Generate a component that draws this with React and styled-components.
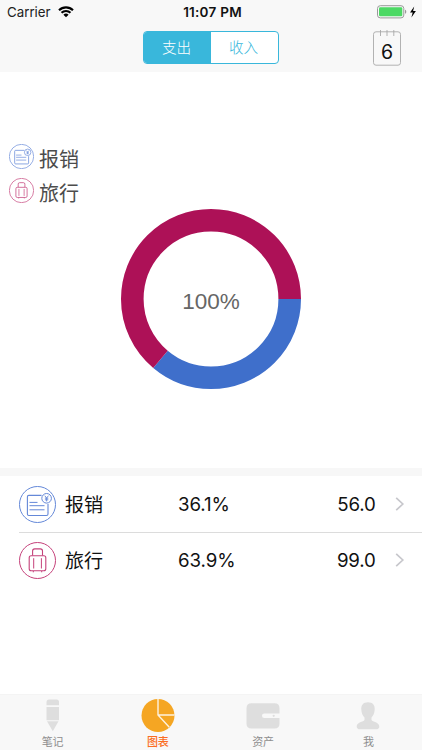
import * as React from 'react';
import styled, { createGlobalStyle } from 'styled-components';

const BLUE = '#3f6fcb';
const CRIMSON = '#ad1157';

const GlobalStyle = createGlobalStyle`
    * {
        box-sizing: border-box;
    }

    body {
        margin: 0;
        background: #fff;
        font-family: Inter, 'Noto Sans CJK SC', sans-serif;
        color: #111;
    }
`;

const Screen = styled.div`
    display: flex;
    flex-direction: column;
    width: 422px;
    height: 750px;
    overflow: hidden;
    background: #fff;
`;

const Header = styled.header`
    height: 72px;
    background: #f8f8f8;
`;

const StatusBar = styled.div`
    display: grid;
    grid-template-columns: 1fr auto 1fr;
    align-items: center;
    height: 24px;
    padding: 0 5px 0 7px;
    line-height: 24px;
`;

const Carrier = styled.div`
    display: flex;
    align-items: center;
    gap: 7px;
    font-size: 13.3px;
    color: #222;
`;

const Clock = styled.div`
    padding-left: 1px;
    font-size: 13.5px;
    font-weight: 600;
    letter-spacing: 0.25px;
`;

const Battery = styled.div`
    display: flex;
    align-items: center;
    justify-content: flex-end;
`;

const NavBar = styled.div`
    display: grid;
    grid-template-columns: 1fr auto 1fr;
    height: 48px;
    padding: 6px 21px 0;
`;

const Segmented = styled.div`
    display: flex;
    width: 136px;
    height: 33px;
    margin-top: 1px;
    border: 1px solid #39b7db;
    border-radius: 4px;
    background: #fff;
    overflow: hidden;
`;

const Segment = styled.button`
    flex: 1;
    padding: 0 2px 2px 0;
    border: 0;
    background: ${props => (props.$active ? '#39b7db' : 'transparent')};
    color: ${props => (props.$active ? '#fff' : '#39b7db')};
    font-family: inherit;
    font-size: 14.6px;
    font-weight: 300;
`;

const Calendar = styled.div`
    display: flex;
    justify-content: flex-end;
`;

const Chart = styled.section`
    display: grid;
    grid-template-rows: 137px 1fr;
    height: 395.5px;
`;

const Legend = styled.ul`
    display: flex;
    flex-direction: column;
    justify-content: flex-end;
    gap: 4px;
    margin: 0;
    padding: 0 9px;
    list-style: none;
`;

const LegendItem = styled.li`
    display: flex;
    align-items: center;
    gap: 5px;
    height: 30px;
    font-size: 20px;
    line-height: 30px;
    color: #4c4c4c;

    svg {
        margin-bottom: 8px;
    }
`;

const Donut = styled.div`
    display: flex;
    justify-content: center;
`;

const DonutTotal = styled.text`
    font-family: 'Liberation Sans', sans-serif;
    font-size: 22.5px;
    fill: #666;
    text-anchor: middle;
`;

const List = styled.ul`
    flex: 1;
    margin: 0;
    padding: 0;
    border-top: 8.5px solid #f7f7f7;
    list-style: none;
`;

const Row = styled.li`
    display: grid;
    grid-template-columns: 46px 113px 1fr auto 10px;
    align-items: center;
    height: ${props => (props.$last ? 55 : 57)}px;
    margin-left: 19px;
    padding: ${props => (props.$last ? 0 : 1)}px 17px 0 0;
    border-bottom: ${props => (props.$last ? 0 : 1)}px solid #dcdcdc;
    font-size: 18.7px;
`;

const Name = styled.span`
    padding-top: 4px;
    font-size: 19px;
    line-height: 28px;
`;

const Percent = styled.span`
    letter-spacing: -0.1px;
`;

const Amount = styled.span`
    padding-right: 19.5px;
    letter-spacing: -0.2px;
`;

const TabBar = styled.nav`
    display: grid;
    grid-template-columns: repeat(4, 1fr);
    height: 56px;
    padding-right: 1px;
    border-top: 1px solid #f4f4f4;
    background: #f8f8f8;
`;

const Tab = styled.a`
    display: flex;
    flex-direction: column;
    align-items: center;
    gap: 1px;
    padding-top: 3px;
    font-size: 11px;
    font-weight: ${props => (props.$active ? 500 : 400)};
    line-height: 16px;
    color: ${props => (props.$active ? '#fb6d22' : '#8e8e8e')};
`;

const WifiIcon = () => (
    <svg width="16" height="12" viewBox="0 0 16 12" fill="none" stroke="#000" strokeWidth="2.1">
        <path d="M1 4.2a10 10 0 0 1 14 0" />
        <path d="M3.5 6.8a6.4 6.4 0 0 1 9 0" />
        <path d="M8 11.3 5.4 8.7a3.7 3.7 0 0 1 5.2 0Z" fill="#000" stroke="none" />
    </svg>
);

const BatteryIcon = () => (
    <svg width="40" height="14" viewBox="0 0 40 14">
        <rect x="0.5" y="0.7" width="26.3" height="12.2" rx="2.8" fill="none" stroke="#999" />
        <rect x="2" y="2.3" width="23.3" height="9" rx="1.2" fill="#4cd964" />
        <path d="M28 4.8c1.7.5 1.7 3.5 0 4Z" fill="#999" />
        <path d="M37.2 1.5 33 7.4h2.7l-1.3 5L38.9 6h-2.8Z" fill="#000" />
    </svg>
);

const CalendarIcon = () => (
    <svg width="28" height="37" viewBox="0 0 28 37" fill="none">
        <rect x="0.5" y="1.8" width="27" height="33.4" rx="2.5" stroke="#b2b2b2" />
        <path d="M7.5 0v6M14 0v6M20.8 0v6" stroke="#a8a8a8" strokeWidth="0.9" />
        <text x="14" y="29.3" fill="#111" fontSize="19.5" textAnchor="middle">
            6
        </text>
    </svg>
);

const ReceiptIcon = ({ size }) => (
    <svg width={size} height={size} viewBox="0 0 37 37" fill="none" stroke="#6488d8">
        <circle cx="18.5" cy="18.5" r="18" />
        <path d="M22.5 9.4H9.8Q8.4 9.4 8.4 10.8V28Q8.4 29.5 9.8 29.5H27.5Q29 29.5 29 28V18" strokeWidth="1.1" />
        <path d="M10.5 16.4h8M10.5 19.7h15M10.5 23.8h15" />
        <circle cx="27.6" cy="12.3" r="4.8" />
        <path d="m25.8 9.7 1.8 2.4 1.8-2.4M27.6 12v3.4M25.9 12.2h3.4M25.9 13.8h3.4" strokeWidth="0.9" />
    </svg>
);

const SuitcaseIcon = ({ size }) => (
    <svg width={size} height={size} viewBox="0 0 37 37" fill="none" stroke="#c5427b">
        <circle cx="18.5" cy="18.5" r="18" />
        <rect x="10.2" y="13.8" width="16.6" height="15" rx="2" strokeWidth="1.1" />
        <path d="M13.6 13.5V9q0-2.1 2.1-2.1h5.7q2.1 0 2.1 2.1v4.5" strokeWidth="1.1" />
        <path d="M14.7 16.2v10.3M22.4 16.2v10.3M14.3 29v1.3M22.7 29v1.3" />
    </svg>
);

const ChevronIcon = () => (
    <svg width="10" height="16" viewBox="0 0 10 16" fill="none" stroke="#c7c7cc" strokeWidth="1.7">
        <path d="m1.2 1.8 6.6 6.2-6.6 6.2" />
    </svg>
);

const PencilIcon = () => (
    <svg width="34" height="35" viewBox="0 0 34 35" fill="#dedede">
        <path d="M10.5 7.3V4q0-2.5 2.5-2.5h7.5Q23 1.5 23 4v3.3Z" />
        <path d="M10.5 8.9H23v13.3H10.5ZM11 23.2h11.5l-5.7 10Z" />
    </svg>
);

const PieIcon = () => (
    <svg width="34" height="35" viewBox="0 0 34 35">
        <circle cx="17" cy="17.5" r="16.5" fill="#f5a623" />
        <path d="M17 1v16l11.3 12.2M17 17h16.5" fill="none" stroke="#fff" strokeOpacity="0.85" strokeWidth="1.4" />
    </svg>
);

const WalletIcon = () => (
    <svg width="34" height="35" viewBox="0 0 34 35" fill="#dedede">
        <path d="M5.5 5.3h23q5 0 5 5v5.3H18.2a2.2 2.2 0 0 0 0 4.4h15.3v5.5q0 5-5 5h-23q-5 0-5-5V10.3q0-5 5-5Z" />
        <circle cx="27.7" cy="17.8" r="1.1" />
    </svg>
);

const PersonIcon = () => (
    <svg width="34" height="35" viewBox="0 0 34 35" fill="#dedede">
        <path d="M17 4.2c-4.6 0-7 2.8-6.7 7.2.2 3.5 1.4 6.2 3.2 8v2.6c-1 2-7.8 2.2-7.8 6.4 0 2.7 2.5 2.9 4.5 2.9h13.6c2 0 4.5-.2 4.5-2.9 0-4.2-6.8-4.4-7.8-6.4v-2.6c1.8-1.8 3-4.5 3.2-8 .3-4.4-2.1-7.2-6.7-7.2Z" />
    </svg>
);

const categories = [
    { name: '报销', percent: 36.1, amount: '56.0', color: BLUE, Icon: ReceiptIcon },
    { name: '旅行', percent: 63.9, amount: '99.0', color: CRIMSON, Icon: SuitcaseIcon },
];

const tabs = [
    { label: '笔记', Icon: PencilIcon },
    { label: '图表', Icon: PieIcon, active: true },
    { label: '资产', Icon: WalletIcon },
    { label: '我', Icon: PersonIcon },
];

const DonutChart = () => {
    let offset = 0;

    return (
        <svg width="180" height="180" viewBox="0 0 180 180">
            {categories.map(({ name, percent, color }) => {
                const start = offset;
                offset += percent;

                return (
                    <circle
                        key={name}
                        cx="90"
                        cy="90"
                        r="78.7"
                        fill="none"
                        stroke={color}
                        strokeWidth="22.6"
                        pathLength="100"
                        strokeDasharray={`${percent} ${100 - percent}`}
                        strokeDashoffset={-start}
                    />
                );
            })}
            <DonutTotal x="90" y="100">
                100%
            </DonutTotal>
        </svg>
    );
};

const App = () => {
    return (
        <Screen>
            <GlobalStyle />
            <Header>
                <StatusBar>
                    <Carrier>
                        Carrier
                        <WifiIcon />
                    </Carrier>
                    <Clock>11:07 PM</Clock>
                    <Battery>
                        <BatteryIcon />
                    </Battery>
                </StatusBar>
                <NavBar>
                    <span />
                    <Segmented>
                        <Segment $active>支出</Segment>
                        <Segment>收入</Segment>
                    </Segmented>
                    <Calendar>
                        <CalendarIcon />
                    </Calendar>
                </NavBar>
            </Header>

            <Chart>
                <Legend>
                    {categories.map(({ name, Icon }) => (
                        <LegendItem key={name}>
                            <Icon size={25} />
                            {name}
                        </LegendItem>
                    ))}
                </Legend>
                <Donut>
                    <DonutChart />
                </Donut>
            </Chart>

            <List>
                {categories.map(({ name, percent, amount, Icon }, i) => (
                    <Row key={name} $last={i === categories.length - 1}>
                        <Icon size={37} />
                        <Name>{name}</Name>
                        <Percent>{percent}%</Percent>
                        <Amount>{amount}</Amount>
                        <ChevronIcon />
                    </Row>
                ))}
            </List>

            <TabBar>
                {tabs.map(({ label, Icon, active }) => (
                    <Tab key={label} $active={active}>
                        <Icon />
                        {label}
                    </Tab>
                ))}
            </TabBar>
        </Screen>
    );
};

export default App;
